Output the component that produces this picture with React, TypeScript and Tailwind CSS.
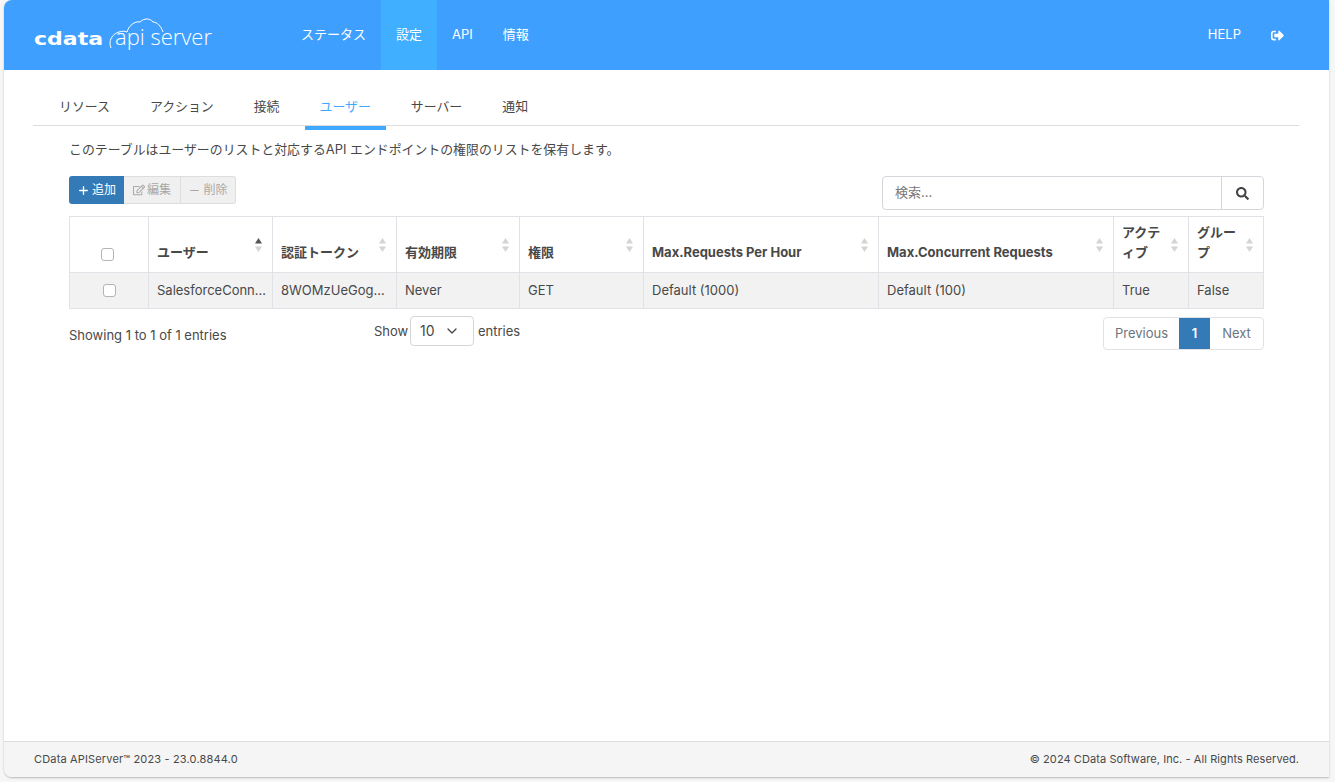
import { ChevronDown, Minus, Plus } from "lucide-react";
import { FaRegEdit, FaSearch, FaSignOutAlt } from "react-icons/fa";

const font = "font-['Inter','Noto_Sans_CJK_JP',sans-serif]";

const navItems = ["ステータス", "設定", "API", "情報"];
const tabs = ["リソース", "アクション", "接続", "ユーザー", "サーバー", "通知"];

const columns = [
	{ label: "", width: "w-[79px]" },
	{ label: "ユーザー", width: "w-[124px]", sorted: true },
	{ label: "認証トークン", width: "w-[124px]" },
	{ label: "有効期限", width: "w-[123px]" },
	{ label: "権限", width: "w-[124px]" },
	{ label: "Max.Requests Per Hour", width: "w-[235px]" },
	{ label: "Max.Concurrent Requests", width: "w-[235px]" },
	{ label: "アクティブ", width: "w-[75px]" },
	{ label: "グループ", width: "w-[75px]" },
];

const row = [
	"SalesforceConnector",
	"8WOMzUeGogX1f7b",
	"Never",
	"GET",
	"Default (1000)",
	"Default (100)",
	"True",
	"False",
];

const Logo = () => (
	<svg width="180" height="36" viewBox="0 0 180 36" className="block" aria-label="CData API Server">
		<text
			x="0"
			y="28"
			fill="#fff"
			fontFamily="'DejaVu Sans', sans-serif"
			fontWeight="700"
			fontSize="17"
			textLength="69"
			lengthAdjust="spacingAndGlyphs"
		>
			cdata
		</text>
		<path
			d="M77 31C74 24 78 17 85 15C88 14 91 14 93 15C95 8 101 4 106 5C110 1 116 1 119 5C123 5 127 9 129 15"
			fill="none"
			stroke="#fff"
			strokeWidth="1"
		/>
		<text
			x="81"
			y="28"
			fill="#fff"
			fontFamily="'Open Sans', sans-serif"
			fontWeight="300"
			fontSize="22"
			textLength="97"
			lengthAdjust="spacingAndGlyphs"
		>
			api server
		</text>
	</svg>
);

const SortArrows = ({ active }: { active?: boolean }) => (
	<svg
		width="7"
		height="16"
		viewBox="0 0 7 16"
		className="absolute right-[10px] top-1/2 -translate-y-1/2"
	>
		<path d="M3.500 1L7 6.500H0Z" fill={active ? "#555" : "#d4d4d4"} />
		<path d="M3.500 15L0 9.500H7Z" fill="#d4d4d4" />
	</svg>
);

const Checkbox = ({ className }: { className: string }) => (
	<input
		type="checkbox"
		className={`block h-[13px] w-[13px] appearance-none rounded-[3px] border border-[#b4b4b4] bg-white ${className}`}
	/>
);

export default function App() {
	return (
		<div className={`${font} flex h-[782px] w-[1335px] overflow-hidden bg-[#f6f6f6] pb-[5px] pl-[4px] pr-[6px] text-[13px] text-[#484848]`}>
			<div className="flex min-w-0 flex-1 flex-col overflow-hidden rounded-l-[8px] bg-white shadow-[0_1px_2px_#b8b8b8]">
				<header className="flex h-[70px] shrink-0 items-stretch bg-[#3f9fff] text-white">
					<div className="ml-[30px] flex w-[252px] items-center pb-[1px]">
						<Logo />
					</div>
					<nav className="flex items-stretch">
						{navItems.map((item) => (
							<a
								key={item}
								className={`flex items-center px-[15px] ${item === "設定" ? "bg-[#40afff]" : ""}`}
							>
								{item}
							</a>
						))}
					</nav>
					<div className="ml-auto flex items-center gap-[30px] pr-[45px]">
						<span>HELP</span>
						<FaSignOutAlt className="h-[13px] w-[13px]" />
					</div>
				</header>

				<main className="flex min-h-0 flex-1 flex-col pl-[29px] pr-[30px] pt-[15px]">
					<div className="flex h-[41px] shrink-0 gap-[10px] border-b border-[#ddd] pl-[11px] text-[12.900px]">
						{tabs.map((tab) => (
							<div
								key={tab}
								className={`flex h-[45px] items-center px-[15px] ${
									tab === "ユーザー" ? "border-b-4 border-[#40a9ff] pt-[2px] text-[#40a9ff]" : "pb-[2px]"
								}`}
							>
								{tab}
							</div>
						))}
					</div>

					<div className="pl-[36px] pr-[35px]">
						<p className="mt-[14px] h-[20px] text-[12.900px] leading-[20px]">
							このテーブルはユーザーのリストと対応するAPI エンドポイントの権限のリストを保有します。
						</p>

						<div className="mt-[16px] flex items-start justify-between">
							<div className="flex h-[28px] text-[12px]">
								<button className="flex w-[55px] items-center justify-center gap-[2px] rounded-l-[3px] bg-[#337ab7] text-white">
									<Plus size={13} strokeWidth={2.500} />
									追加
								</button>
								<button className="flex w-[57px] items-center justify-center gap-[2px] border border-l-0 border-[#ddd] bg-[#f0f0f0] text-[#a8a8a8]">
									<FaRegEdit className="h-[12px] w-[12px]" />
									編集
								</button>
								<button className="flex w-[55px] items-center justify-center gap-[2px] rounded-r-[3px] border border-l-0 border-[#ddd] bg-[#f0f0f0] text-[#a8a8a8]">
									<Minus size={13} strokeWidth={2} />
									削除
								</button>
							</div>
							<div className="flex h-[34px] w-[382px] rounded-[4px] border border-[#d4d6dc]">
								<div className="flex flex-1 items-center pl-[12px] text-[#777]">検索...</div>
								<div className="flex w-[42px] items-center justify-center border-l border-[#d4d6dc]">
									<FaSearch className="h-[13px] w-[13px] text-[#444]" />
								</div>
							</div>
						</div>

						<table className="mt-[6px] w-[1195px] table-fixed border-collapse">
							<thead>
								<tr className="h-[56px]">
									{columns.map((col) => (
										<th
											key={col.label || "select"}
											className={`${col.width} relative border border-[#e0e2e8] pb-[10px] pl-[8px] pt-[5px] text-left align-bottom font-bold leading-[20px] ${
												col.label ? "pr-[24px]" : "pr-[8px]"
											}`}
										>
											{col.label ? (
												<>
													{col.label}
													<SortArrows active={col.sorted} />
												</>
											) : (
												<Checkbox className="mx-auto -translate-x-[2px] -translate-y-[1px]" />
											)}
										</th>
									))}
								</tr>
							</thead>
							<tbody>
								<tr className="h-[36px] bg-[#f2f2f2]">
									<td className="border border-[#e0e2e8]">
										<Checkbox className="mx-auto" />
									</td>
									{row.map((cell) => (
										<td key={cell} className="truncate border border-[#e0e2e8] pl-[8px] pr-[5px]">
											{cell}
										</td>
									))}
								</tr>
							</tbody>
						</table>

						<div className="mt-[7px] flex items-start">
							<div className="mt-[9px] w-[305px] leading-[20px]">Showing 1 to 1 of 1 entries</div>
							<div className="flex items-center leading-[20px]">
								<span className="mr-[3px] w-[33px]">Show</span>
								<div className="flex h-[30px] w-[64px] items-center justify-between rounded-[4px] border border-[#d4d6dc] pl-[9px] pr-[13px] text-[14px]">
									10
									<ChevronDown size={16} strokeWidth={2} />
								</div>
								<span className="ml-[4px]">entries</span>
							</div>
							<div className="ml-auto mt-[1px] flex h-[33px] overflow-hidden rounded-[4px] border border-[#e0e2e6] text-[#6c757d]">
								<span className="flex w-[75px] items-center justify-center">Previous</span>
								<span className="flex w-[31px] items-center justify-center bg-[#337ab7] font-semibold text-white">1</span>
								<span className="flex w-[53px] items-center justify-center">Next</span>
							</div>
						</div>
					</div>
				</main>

				<footer className="flex h-[36px] shrink-0 items-center justify-between border-t border-[#ddd] bg-[#f5f5f5] pl-[30px] pr-[30px] text-[11px]">
					<span className="tracking-[0.16px]">CData APIServer™ 2023 - 23.0.8844.0</span>
					<span className="tracking-[0.08px]">© 2024 CData Software, Inc. - All Rights Reserved.</span>
				</footer>
			</div>
		</div>
	);
}
